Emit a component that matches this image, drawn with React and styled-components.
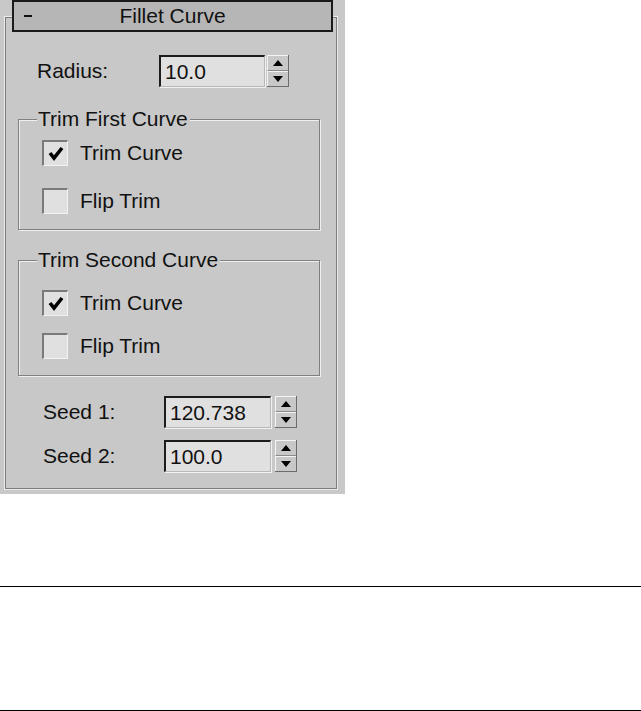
import React from "react";
import styled, { createGlobalStyle } from "styled-components";

const Global = createGlobalStyle`
  html, body { margin: 0; padding: 0; background: #ffffff; }
  body { font-family: "Liberation Sans", Arial, sans-serif; }
`;

const Page = styled.div`
  width: 641px;
  height: 711px;
  background: #ffffff;
  display: flex;
  flex-direction: column;
`;

const Panel = styled.div`
  box-sizing: border-box;
  width: 345px;
  height: 494px;
  background: #c8c8c8;
  padding: 16px 0 0 4px;
  font-family: "Liberation Sans", Arial, sans-serif;
  font-size: 21px;
  color: #111;
`;

const Frame = styled.div`
  box-sizing: border-box;
  width: 334px;
  height: 474px;
  border: 1px solid #ececec;
  box-shadow: inset 0 0 0 1px #7c7c7c;
  display: flex;
  flex-direction: column;
  align-items: flex-start;
`;

const Header = styled.div`
  box-sizing: border-box;
  margin: -17px 0 0 7px;
  width: 321px;
  height: 32px;
  border: 2px solid #1a1a1a;
  background: #b6b6b6;
  display: grid;
  grid-template-columns: 1fr auto 1fr;
  align-items: center;
  line-height: 28px;
`;

const Minus = styled.span`
  justify-self: start;
  margin-left: 10px;
  width: 8px;
  height: 2px;
  background: #111;
`;

const Title = styled.span`
  justify-self: center;
`;

const Row = styled.div`
  display: flex;
  align-items: center;
  height: 32px;
  margin: ${(p) => p.$mt}px 0 0 ${(p) => p.$ml}px;
`;

const Label = styled.span`
  width: ${(p) => p.$w}px;
  line-height: 32px;
`;

const Field = styled.div`
  box-sizing: border-box;
  width: ${(p) => p.$w}px;
  height: 32px;
  background: #e0e0e0;
  border-top: 2px solid #1c1c1c;
  border-left: 2px solid #1c1c1c;
  border-right: 1px solid #b8b8b8;
  border-bottom: 1px solid #b8b8b8;
  box-shadow: 1px 1px 0 #f2f2f2;
  padding-left: 4px;
  line-height: 29px;
  white-space: nowrap;
`;

const Spinner = styled.div`
  box-sizing: border-box;
  margin-left: ${(p) => p.$gap}px;
  width: ${(p) => p.$w}px;
  height: 32px;
  display: grid;
  grid-template-rows: 1fr 1fr;
  background: #c8c8c8;
  border-right: 1px solid #6c6c6c;
  border-bottom: 1px solid #6c6c6c;
`;

const SpinHalf = styled.div`
  display: flex;
  align-items: center;
  justify-content: center;
  border-top: 1px solid #f4f4f4;
  border-left: 1px solid #f4f4f4;
  border-bottom: ${(p) => (p.$top ? "1px solid #8a8a8a" : "0")};
`;

const Arrow = ({ up }) => (
  <svg width="10" height="6" viewBox="0 0 10 6">
    {up ? (
      <polygon points="0,6 10,6 5,0" fill="#000" />
    ) : (
      <polygon points="0,0 10,0 5,6" fill="#000" />
    )}
  </svg>
);

const Group = styled.div`
  position: relative;
  box-sizing: border-box;
  margin: ${(p) => p.$mt}px 0 0 13px;
  width: 302px;
  height: ${(p) => p.$h}px;
  border: 1px solid #808080;
  box-shadow: inset 1px 1px 0 #efefef, 1px 1px 0 #efefef;
  padding: ${(p) => p.$pt}px 0 0 23px;
  display: flex;
  flex-direction: column;
  gap: ${(p) => p.$gap}px;
`;

const Legend = styled.span`
  position: absolute;
  top: -11px;
  left: 18px;
  padding: 0 2px 0 1px;
  background: #c8c8c8;
  line-height: 20px;
`;

const CheckRow = styled.label`
  display: flex;
  align-items: center;
  gap: 12px;
  height: 26px;
  line-height: 26px;
`;

const Box = styled.span`
  box-sizing: border-box;
  width: 26px;
  height: 26px;
  background: #e0e0e0;
  border-top: 2px solid #7a7a7a;
  border-left: 2px solid #7a7a7a;
  border-right: 1px solid #f2f2f2;
  border-bottom: 1px solid #f2f2f2;
  display: flex;
  align-items: center;
  justify-content: center;
`;

const Check = () => (
  <svg width="16" height="15" viewBox="0 0 16 15">
    <polyline points="2,7 6,12 14,2" fill="none" stroke="#000" strokeWidth="3.6" strokeLinejoin="miter" />
  </svg>
);

const Rule = styled.div`
  width: 641px;
  height: 1px;
  background: #000;
  margin-top: ${(p) => p.$mt}px;
`;

function CheckItem({ checked, children }) {
  return (
    <CheckRow>
      <Box>{checked && <Check />}</Box>
      <span>{children}</span>
    </CheckRow>
  );
}

function SpinRow({ label, value, mt, ml, lw, fw, gap, sw }) {
  return (
    <Row $mt={mt} $ml={ml}>
      <Label $w={lw}>{label}</Label>
      <Field $w={fw}>{value}</Field>
      <Spinner $gap={gap} $w={sw}>
        <SpinHalf $top>
          <Arrow up />
        </SpinHalf>
        <SpinHalf>
          <Arrow />
        </SpinHalf>
      </Spinner>
    </Row>
  );
}

export default function App() {
  return (
    <>
      <Global />
      <Page>
        <Panel>
          <Frame>
            <Header>
              <Minus />
              <Title>Fillet Curve</Title>
              <span />
            </Header>
            <SpinRow label="Radius:" value="10.0" mt={23} ml={32} lw={122} fw={106} gap={2} sw={22} />
            <Group $mt={32} $h={111} $pt={20} $gap={22}>
              <Legend>Trim First Curve</Legend>
              <CheckItem checked>Trim Curve</CheckItem>
              <CheckItem>Flip Trim</CheckItem>
            </Group>
            <Group $mt={30} $h={116} $pt={29} $gap={17}>
              <Legend>Trim Second Curve</Legend>
              <CheckItem checked>Trim Curve</CheckItem>
              <CheckItem>Flip Trim</CheckItem>
            </Group>
            <SpinRow label="Seed 1:" value="120.738" mt={20} ml={38} lw={121} fw={107} gap={4} sw={22} />
            <SpinRow label="Seed 2:" value="100.0" mt={12} ml={38} lw={121} fw={107} gap={4} sw={22} />
          </Frame>
        </Panel>
        <Rule $mt={92} />
        <Rule $mt={123} />
      </Page>
    </>
  );
}
